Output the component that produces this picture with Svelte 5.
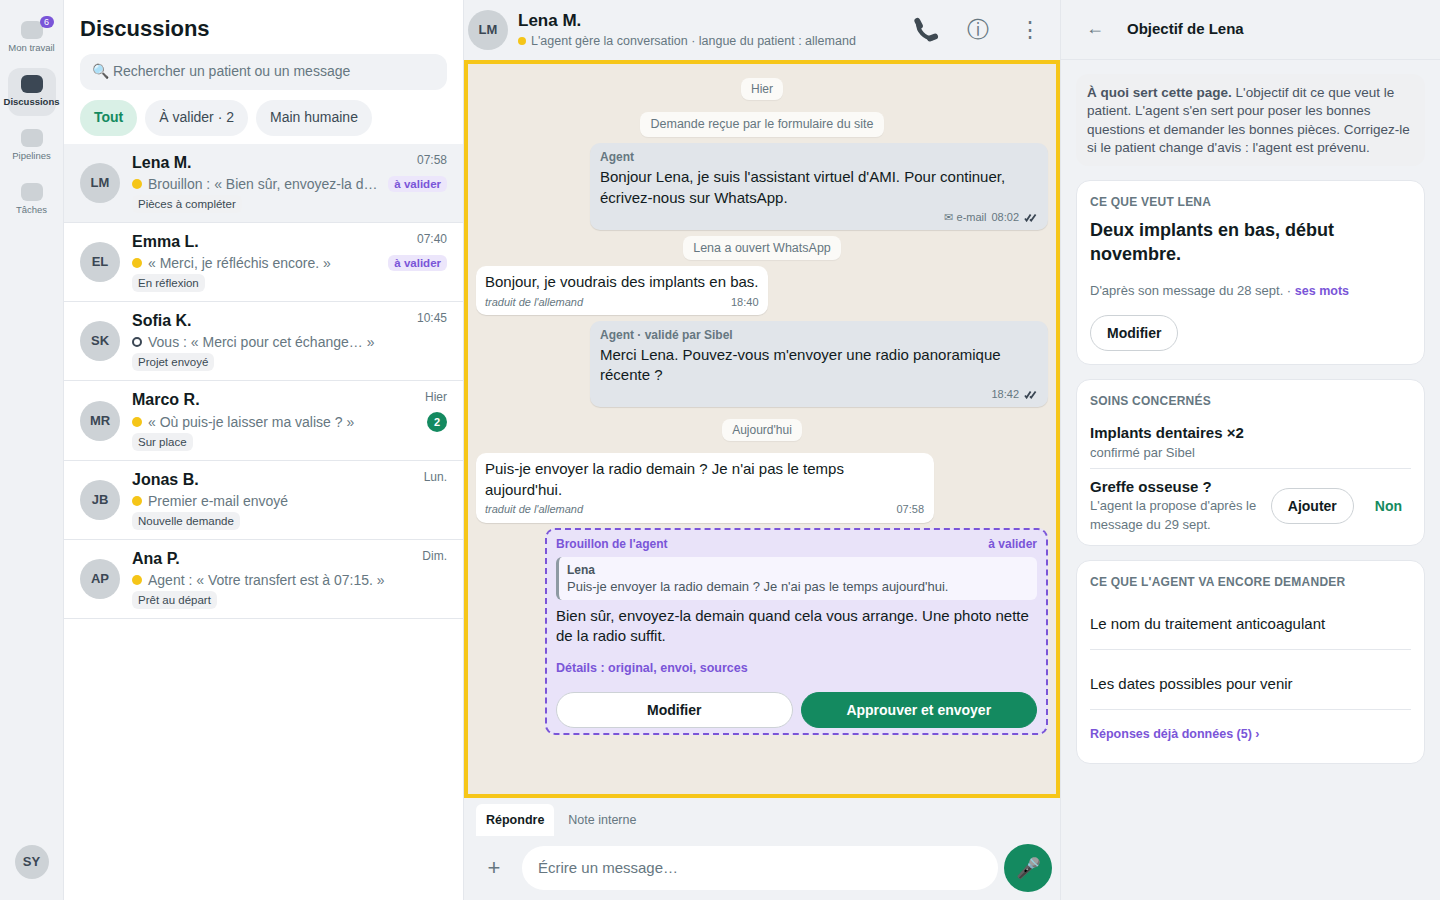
<script>
  const nav = [
    { label: 'Mon travail', badge: 6 },
    { label: 'Discussions', active: true },
    { label: 'Pipelines' },
    { label: 'Tâches' }
  ];

  const rows = [
    { ini: 'LM', name: 'Lena M.', time: '07:58', text: 'Brouillon : « Bien sûr, envoyez-la d…', tag: 'Pièces à compléter', flag: true, current: true },
    { ini: 'EL', name: 'Emma L.', time: '07:40', text: '« Merci, je réfléchis encore. »', tag: 'En réflexion', flag: true },
    { ini: 'SK', name: 'Sofia K.', time: '10:45', text: 'Vous : « Merci pour cet échange… »', tag: 'Projet envoyé', hollow: true },
    { ini: 'MR', name: 'Marco R.', time: 'Hier', text: '« Où puis-je laisser ma valise ? »', tag: 'Sur place', count: 2 },
    { ini: 'JB', name: 'Jonas B.', time: 'Lun.', text: 'Premier e-mail envoyé', tag: 'Nouvelle demande' },
    { ini: 'AP', name: 'Ana P.', time: 'Dim.', text: 'Agent : « Votre transfert est à 07:15. »', tag: 'Prêt au départ' }
  ];
</script>

{#snippet ticks()}
  <svg class="ticks" viewBox="0 0 14 9" width="14" height="9" fill="none" stroke="#3b4754" stroke-width="1.8">
    <path d="M1 5.5 2.6 7.6 6.6 1.4" />
    <path d="M6 6.4 7.2 7.6 11.6 1.4" />
  </svg>
{/snippet}

<div class="app">
  <nav class="rail">
    {#each nav as item}
      <div class="rail-item" class:active={item.active}>
        <span class="rail-icon">
          {#if item.badge}<span class="rail-badge">{item.badge}</span>{/if}
        </span>
        <span class="rail-label">{item.label}</span>
      </div>
    {/each}
    <div class="rail-user">SY</div>
  </nav>

  <section class="list">
    <h1>Discussions</h1>
    <div class="search">🔍 Rechercher un patient ou un message</div>
    <div class="chips">
      <span class="chip chip--on">Tout</span>
      <span class="chip">À valider · 2</span>
      <span class="chip">Main humaine</span>
    </div>
    {#each rows as row}
      <div class="row" class:current={row.current}>
        <div class="avatar">{row.ini}</div>
        <div class="row-body">
          <div class="row-top">
            <span class="row-name">{row.name}</span>
            <span class="row-time">{row.time}</span>
          </div>
          <div class="row-mid" class:tall={row.count}>
            <span class="dot" class:hollow={row.hollow}></span>
            <span class="row-text">{row.text}</span>
            {#if row.flag}<span class="flag">à valider</span>{/if}
            {#if row.count}<span class="count">{row.count}</span>{/if}
          </div>
          <span class="tag">{row.tag}</span>
        </div>
      </div>
    {/each}
  </section>

  <main class="chat">
    <header class="chat-head">
      <div class="avatar">LM</div>
      <div class="chat-who">
        <div class="chat-name">Lena M.</div>
        <div class="chat-status"><span class="dot dot--small"></span>L'agent gère la conversation · langue du patient : allemand</div>
      </div>
      <div class="chat-tools">
        <span class="tool">
          <svg class="phone" viewBox="0 0 24 24" width="26" height="26" fill="none" stroke="#3f4a52" stroke-linecap="round">
            <path d="M4.6 5.5C4.6 13 10.5 19.6 18 19.6" stroke-width="3.8" />
            <path d="M4 3.6 6.4 8.2" stroke-width="5.4" />
            <path d="M15.6 19.8 20.4 18" stroke-width="5.4" />
          </svg>
        </span>
        <span class="tool">ⓘ</span>
        <span class="tool">⋮</span>
      </div>
    </header>

    <div class="thread">
      <div class="note note--day">Hier</div>
      <div class="note">Demande reçue par le formulaire du site</div>
      <div class="bubble bubble--out">
        <div class="who">Agent</div>
        <p>Bonjour Lena, je suis l'assistant virtuel d'AMI. Pour continuer, écrivez-nous sur WhatsApp.</p>
        <div class="meta meta--end"><span>✉ e-mail</span><span>08:02</span>{@render ticks()}</div>
      </div>
      <div class="note">Lena a ouvert WhatsApp</div>
      <div class="bubble bubble--in">
        <p>Bonjour, je voudrais des implants en bas.</p>
        <div class="meta"><em>traduit de l'allemand</em><span>18:40</span></div>
      </div>
      <div class="bubble bubble--out">
        <div class="who">Agent · validé par Sibel</div>
        <p>Merci Lena. Pouvez-vous m'envoyer une radio panoramique récente ?</p>
        <div class="meta meta--end"><span>18:42</span>{@render ticks()}</div>
      </div>
      <div class="note note--day">Aujourd'hui</div>
      <div class="bubble bubble--in bubble--wide">
        <p>Puis-je envoyer la radio demain ? Je n'ai pas le temps aujourd'hui.</p>
        <div class="meta"><em>traduit de l'allemand</em><span>07:58</span></div>
      </div>
      <div class="draft">
        <div class="draft-head"><span>Brouillon de l'agent</span><span>à valider</span></div>
        <div class="quote">
          <b>Lena</b>
          <span>Puis-je envoyer la radio demain ? Je n'ai pas le temps aujourd'hui.</span>
        </div>
        <p>Bien sûr, envoyez-la demain quand cela vous arrange. Une photo nette de la radio suffit.</p>
        <div class="draft-link">Détails : original, envoi, sources</div>
        <div class="draft-actions">
          <button class="btn-light">Modifier</button>
          <button class="btn-green">Approuver et envoyer</button>
        </div>
      </div>
    </div>

    <footer class="composer">
      <div class="tabs">
        <span class="tab tab--on">Répondre</span>
        <span class="tab">Note interne</span>
      </div>
      <div class="compose-row">
        <span class="plus">+</span>
        <div class="input">Écrire un message…</div>
        <span class="mic">🎤</span>
      </div>
    </footer>
  </main>

  <aside class="side">
    <header class="side-head">
      <span class="back">←</span>
      <span class="side-title">Objectif de Lena</span>
    </header>
    <div class="side-body">
      <div class="help"><b>À quoi sert cette page.</b> L'objectif dit ce que veut le patient. L'agent s'en sert pour poser les bonnes questions et demander les bonnes pièces. Corrigez-le si le patient change d'avis : l'agent est prévenu.</div>

      <section class="card">
        <h2>Ce que veut Lena</h2>
        <div class="goal">Deux implants en bas, début novembre.</div>
        <div class="source">D'après son message du 28 sept. · <a href="#mots">ses mots</a></div>
        <button class="btn-small">Modifier</button>
      </section>

      <section class="card">
        <h2>Soins concernés</h2>
        <div class="care care--line">
          <strong>Implants dentaires ×2</strong>
          <small>confirmé par Sibel</small>
        </div>
        <div class="care-row">
          <div class="care">
            <strong>Greffe osseuse ?</strong>
            <small>L'agent la propose d'après le message du 29 sept.</small>
          </div>
          <button class="btn-small">Ajouter</button>
          <span class="no">Non</span>
        </div>
      </section>

      <section class="card">
        <h2 class="asks-title">Ce que l'agent va encore demander</h2>
        <div class="ask">Le nom du traitement anticoagulant</div>
        <div class="ask">Les dates possibles pour venir</div>
        <a class="more" href="#reponses">Réponses déjà données (5) ›</a>
      </section>
    </div>
  </aside>
</div>

<style>
  :global(body) {
    margin: 0;
    font-family: "Liberation Sans", Arial, sans-serif;
    color: #111b21;
  }

  .app {
    display: grid;
    grid-template-columns: 64px 400px 597px 379px;
    height: 900px;
    overflow: hidden;
    background: #fff;
  }

  /* rail */
  .rail {
    display: flex;
    flex-direction: column;
    align-items: center;
    padding-top: 14px;
    gap: 6px;
    background: #f0f2f5;
    border-right: 1px solid #e4e7ec;
  }
  .rail-item {
    display: flex;
    flex-direction: column;
    align-items: center;
    box-sizing: border-box;
    width: 48px;
    height: 48px;
    padding-top: 7px;
    border-radius: 12px;
    gap: 2.5px;
    color: #667781;
  }
  .rail-item.active {
    background: #e1e4e8;
    color: #2b3640;
    font-weight: 700;
  }
  .rail-icon {
    position: relative;
    width: 22px;
    height: 18px;
    border-radius: 6px;
    background: #cdd2d6;
  }
  .active .rail-icon {
    background: #3b4754;
  }
  .rail-badge {
    position: absolute;
    top: -5px;
    right: -11px;
    width: 14px;
    height: 12px;
    border-radius: 6px;
    background: #7a55d8;
    color: #fff;
    font-size: 9px;
    line-height: 12px;
    text-align: center;
  }
  .rail-label {
    font-size: 9.5px;
    line-height: 11px;
    white-space: nowrap;
  }
  .rail-user {
    display: grid;
    place-items: center;
    box-sizing: border-box;
    width: 34px;
    height: 34px;
    margin-top: auto;
    margin-bottom: 21px;
    padding-bottom: 1px;
    border-radius: 50%;
    background: #cdd2d6;
    color: #3b4754;
    font-size: 13px;
    font-weight: 700;
  }

  /* list */
  .list {
    border-right: 1px solid #e4e7ec;
    min-width: 0;
  }
  h1 {
    margin: 0;
    padding: 16px 16px 12px;
    font-size: 22px;
    line-height: 26px;
  }
  .search {
    margin: 0 16px;
    height: 36px;
    padding-left: 12px;
    border-radius: 12px;
    background: #f0f2f5;
    color: #667781;
    font-size: 14px;
    line-height: 35px;
  }
  .chips {
    display: flex;
    gap: 8px;
    padding: 10px 16px 8px;
  }
  .chip {
    height: 36px;
    padding: 0 14px;
    border-radius: 18px;
    background: #f0f2f5;
    color: #3b4a54;
    font-size: 14px;
    line-height: 35px;
  }
  .chip--on {
    background: #d9f0e6;
    color: #148a60;
    font-weight: 700;
  }
  .row {
    display: flex;
    align-items: center;
    gap: 12px;
    padding: 9px 16px;
    border-bottom: 1px solid #e4e7ec;
  }
  .row.current {
    background: #f0f2f5;
  }
  .avatar {
    flex: none;
    display: grid;
    place-items: center;
    box-sizing: border-box;
    width: 40px;
    height: 40px;
    padding-bottom: 1px;
    border-radius: 50%;
    background: #cdd2d6;
    color: #3b4754;
    font-size: 13px;
    font-weight: 700;
  }
  .row-body {
    flex: 1;
    min-width: 0;
  }
  .row-top {
    display: flex;
    justify-content: space-between;
    align-items: flex-start;
  }
  .row-name {
    font-size: 16px;
    font-weight: 700;
    line-height: 20px;
  }
  .row-time {
    color: #667781;
    font-size: 12px;
    line-height: 14px;
  }
  .row-mid {
    display: flex;
    align-items: center;
    height: 22px;
  }
  .row-mid.tall {
    height: 23px;
  }
  .dot {
    flex: none;
    width: 10px;
    height: 10px;
    margin-right: 6px;
    border-radius: 50%;
    background: #f5c518;
  }
  .dot.hollow {
    box-sizing: border-box;
    background: none;
    border: 2px solid #3b4754;
  }
  .dot--small {
    display: inline-block;
    width: 8px;
    height: 8px;
    margin-right: 5px;
  }
  .row-text {
    flex: 1;
    min-width: 0;
    white-space: nowrap;
    color: #667781;
    font-size: 14px;
  }
  .flag {
    margin-left: 10px;
    padding: 2px 6px;
    border-radius: 6px;
    background: #ece6fb;
    color: #7a55d8;
    font-size: 11.5px;
    font-weight: 700;
  }
  .count {
    width: 20px;
    height: 20px;
    border-radius: 50%;
    background: #148a60;
    color: #fff;
    font-size: 11px;
    font-weight: 700;
    line-height: 20px;
    text-align: center;
  }
  .tag {
    display: block;
    width: fit-content;
    padding: 0 6px;
    border-radius: 6px;
    background: #f0f1f3;
    color: #3b4a54;
    font-size: 11.5px;
    line-height: 18px;
  }

  /* chat */
  .chat {
    display: flex;
    flex-direction: column;
    min-width: 0;
    border-right: 1px solid #e4e7ec;
  }
  .chat-head {
    display: flex;
    align-items: center;
    height: 60px;
    padding: 0 4px;
    background: #f0f2f5;
    box-sizing: border-box;
  }
  .chat-who {
    margin-left: 10px;
    flex: 1;
  }
  .chat-name {
    font-size: 17px;
    font-weight: 700;
    line-height: 20px;
  }
  .chat-status {
    margin-top: 2px;
    color: #667781;
    font-size: 12.5px;
    line-height: 16px;
  }
  .chat-tools {
    display: flex;
    align-items: center;
  }
  .tool {
    display: grid;
    place-items: center;
    width: 52px;
    color: #667781;
    font-size: 22px;
  }
  .phone {
    display: block;
  }
  .thread {
    flex: 1;
    display: flex;
    flex-direction: column;
    gap: 6px;
    padding: 14px 8px;
    background: #efeae2;
    border: 4px solid #f6c619;
    overflow: hidden;
  }
  .note {
    align-self: center;
    padding: 5px 10px;
    border-radius: 8px;
    background: #fbfaf7;
    color: #667781;
    font-size: 12.5px;
    line-height: 15px;
    box-shadow: 0 1px 1px rgba(0, 0, 0, .05);
  }
  .bubble + .note {
    line-height: 14px;
  }
  .note--day,
  .bubble + .note--day {
    padding: 4px 10px;
    font-size: 12px;
    line-height: 14px;
    margin-bottom: 6px;
  }
  .bubble + .note--day {
    margin-top: 6px;
  }
  .bubble {
    box-sizing: border-box;
    border-radius: 10px;
    font-size: 15px;
    box-shadow: 0 1px 1px rgba(0, 0, 0, .1);
  }
  .bubble p,
  .draft p {
    margin: 0;
  }
  .bubble--out {
    align-self: flex-end;
    width: 458px;
    padding: 6px 10px;
    background: #e1e5ea;
    line-height: 20.75px;
  }
  .bubble--out p {
    margin-top: 2px;
  }
  .bubble--in {
    align-self: flex-start;
    padding: 5px 9px 6px;
    background: #fff;
    line-height: 21px;
  }
  .bubble--wide {
    width: 458px;
    padding-right: 10px;
    padding-bottom: 6.5px;
  }
  .who {
    color: #667781;
    font-size: 12px;
    font-weight: 700;
    line-height: 16px;
  }
  .meta {
    display: flex;
    justify-content: space-between;
    gap: 6px;
    margin-top: 3px;
    color: #667781;
    font-size: 11px;
    line-height: 14px;
  }
  .bubble--wide .meta {
    margin-top: 2px;
  }
  .meta--end {
    justify-content: flex-end;
    align-items: center;
    gap: 5px;
    margin-top: 1px;
  }
  .ticks {
    display: block;
    margin-top: 1px;
  }
  .draft {
    align-self: flex-end;
    box-sizing: border-box;
    width: 503px;
    margin-top: -1px;
    padding: 7px 9px 5px;
    border: 2px dashed #7a55d8;
    border-radius: 10px;
    background: #e9e3f9;
    font-size: 15px;
    line-height: 20px;
  }
  .draft-head {
    display: flex;
    justify-content: space-between;
    color: #7a55d8;
    font-size: 12px;
    font-weight: 700;
    line-height: 14px;
  }
  .quote {
    display: flex;
    flex-direction: column;
    margin: 6px 0;
    padding: 5px 8px;
    border-left: 3px solid #8e9aa3;
    border-radius: 6px;
    background: #f7f5fe;
    color: #4a5761;
    font-size: 13px;
    line-height: 17px;
  }
  .quote b {
    font-size: 12px;
    line-height: 16px;
  }
  .draft-link {
    margin-top: 14px;
    color: #7a55d8;
    font-size: 12.5px;
    font-weight: 700;
    line-height: 16px;
  }
  .draft-actions {
    display: flex;
    gap: 8px;
    margin-top: 16px;
  }
  .draft-actions button {
    flex: 1 1 0;
    height: 36px;
    border-radius: 18px;
    font: 700 14px "Liberation Sans", Arial, sans-serif;
  }
  .btn-light {
    border: 1px solid #cdd2d6;
    background: #fff;
    color: #111b21;
  }
  .btn-green {
    border: 1px solid #148a60;
    background: #148a60;
    color: #fff;
  }
  .composer {
    height: 102px;
    padding: 6px 8px 0 12px;
    box-sizing: border-box;
    background: #f0f2f5;
  }
  .tabs {
    display: flex;
    height: 32px;
  }
  .tab {
    padding: 0 10px;
    margin-right: 4px;
    color: #667781;
    font-size: 12.5px;
    line-height: 32px;
  }
  .tab--on {
    background: #fff;
    border-radius: 6px 6px 0 0;
    color: #111b21;
    font-weight: 700;
  }
  .compose-row {
    display: flex;
    align-items: center;
    margin-top: 8px;
  }
  .plus {
    width: 36px;
    margin-right: 10px;
    text-align: center;
    color: #667781;
    font-size: 22px;
  }
  .input {
    flex: 1;
    height: 44px;
    padding-left: 16px;
    border-radius: 22px;
    background: #fff;
    color: #667781;
    font-size: 15px;
    line-height: 44px;
  }
  .mic {
    display: grid;
    place-items: center;
    width: 48px;
    height: 48px;
    margin-left: 6px;
    border-radius: 50%;
    background: #148a60;
    font-size: 20px;
  }

  /* objective panel */
  .side {
    background: #f0f2f5;
  }
  .side-head {
    display: flex;
    align-items: center;
    height: 60px;
    box-sizing: border-box;
    padding: 0 0 2px 25px;
    border-bottom: 1px solid #e4e7ec;
  }
  .back {
    width: 41px;
    color: #667781;
    font-size: 18px;
  }
  .side-title {
    font-size: 15px;
    font-weight: 700;
  }
  .side-body {
    display: flex;
    flex-direction: column;
    gap: 14px;
    padding: 14px 15px 0;
  }
  .help {
    padding: 10px 11px 8.4px;
    border-radius: 12px;
    background: #eff0f2;
    color: #4a5563;
    font-size: 13.5px;
    line-height: 18.4px;
  }
  .card {
    padding: 14px 13px 13px;
    border: 1px solid #e4e7ec;
    border-radius: 14px;
    background: #fff;
  }
  h2 {
    margin: 0;
    color: #667781;
    font-size: 12px;
    line-height: 14px;
    letter-spacing: .24px;
    text-transform: uppercase;
  }
  .asks-title {
    margin-bottom: 1px;
  }
  .goal {
    margin-top: 10px;
    font-size: 18px;
    font-weight: 700;
    line-height: 23.5px;
  }
  .source {
    margin-top: 16px;
    color: #667781;
    font-size: 13px;
    line-height: 18px;
  }
  .source a,
  .more {
    color: #7a55d8;
    font-size: 12.5px;
    font-weight: 700;
    text-decoration: none;
  }
  .btn-small {
    height: 36px;
    padding: 0 16px;
    border: 1px solid #cdd2d6;
    border-radius: 18px;
    background: #fff;
    color: #111b21;
    font: 700 14px "Liberation Sans", Arial, sans-serif;
  }
  .source + .btn-small {
    margin-top: 15px;
    display: block;
  }
  .care {
    display: flex;
    flex-direction: column;
    min-width: 0;
  }
  .care--line {
    margin-top: 15px;
    padding-bottom: 6px;
    border-bottom: 1px solid #e4e7ec;
  }
  .care strong {
    font-size: 15px;
    line-height: 20px;
  }
  .care small {
    color: #667781;
    font-size: 13px;
    line-height: 18.5px;
  }
  .care--line small {
    margin-top: 1px;
    line-height: 18px;
  }
  .care-row {
    display: flex;
    align-items: center;
    margin: 8px 0 -2px;
  }
  .care-row .care {
    flex: 1;
  }
  .no {
    padding: 0 9px 0 21px;
    color: #148a60;
    font-size: 14px;
    font-weight: 700;
  }
  .ask {
    display: flex;
    align-items: flex-end;
    box-sizing: border-box;
    height: 60px;
    padding-bottom: 17px;
    border-bottom: 1px solid #e4e7ec;
    font-size: 15px;
  }
  .more {
    display: block;
    margin: 17px 0 9px;
    line-height: 14px;
  }
</style>
